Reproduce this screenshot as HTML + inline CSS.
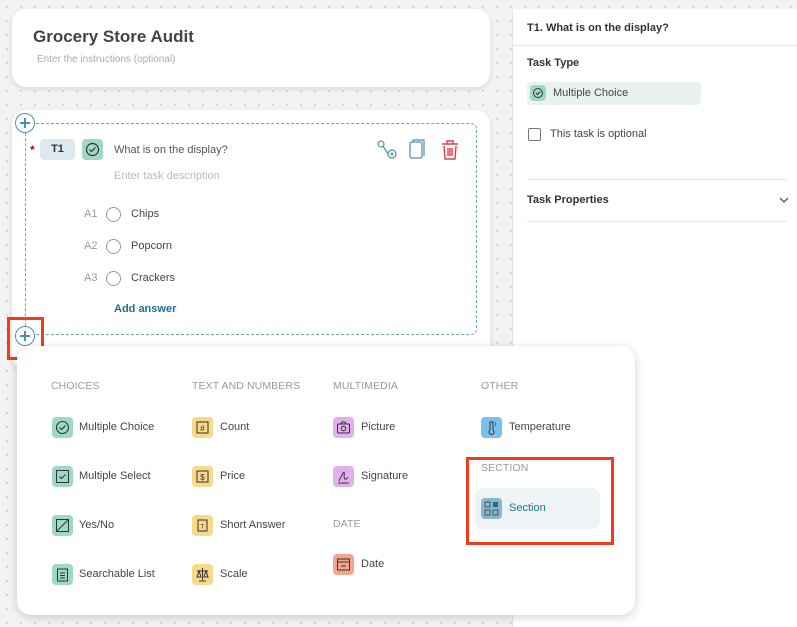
<!DOCTYPE html>
<html><head><style>
*{box-sizing:border-box;margin:0;padding:0}
body{width:797px;height:627px;overflow:hidden;background:#f3f3f3;background-image:radial-gradient(#d4d4d4 1px,transparent 1.2px);background-size:14px 14px;font-family:"Liberation Sans",sans-serif;position:relative;color:#444}
.abs{position:absolute}
.card{position:absolute;background:#fff;border-radius:14px;box-shadow:0 2px 6px rgba(0,0,0,.12)}
.ic{position:absolute;width:21px;height:21px;border-radius:4px}
.lbl{position:absolute;font-size:11px;color:#444}
.hd{position:absolute;font-size:10.5px;color:#999;letter-spacing:.1px}
.g{background:#9ed8c8}.y{background:#f8d98a}.p{background:#e2b0ef}.b{background:#7cc1ec}.o{background:#f4a48f}
.circ{position:absolute;width:20px;height:20px;border:1.2px solid #4d8fb0;border-radius:50%;background:#fff}
.circ:before{content:"";position:absolute;left:4px;top:8.4px;width:10px;height:1.2px;background:#4d8fb0}
.circ:after{content:"";position:absolute;left:8.4px;top:4px;width:1.2px;height:10px;background:#4d8fb0}
.radio{position:absolute;width:15px;height:15px;border:1.3px solid #999;border-radius:50%}
</style></head><body>

<div class="card" style="left:12px;top:9px;width:478px;height:78px">
 <div class="abs" style="left:21px;top:18px;font-size:17px;font-weight:bold;color:#444">Grocery Store Audit</div>
 <div class="abs" style="left:25px;top:45px;font-size:10px;color:#aaa">Enter the instructions (optional)</div>
</div>

<div class="card" style="left:12px;top:110px;width:478px;height:260px"></div>
<div class="abs" style="left:25px;top:123px;width:452px;height:212px;border:1px dashed #6ea3bf;border-radius:6px"></div>
<div class="circ" style="left:15px;top:113px"></div>
<div class="abs" style="left:30px;top:143px;color:#c00;font-size:12px;font-weight:bold">*</div>
<div class="abs" style="left:40px;top:139px;width:35px;height:21px;background:#dde9ef;border-radius:4px;font-size:11px;font-weight:bold;text-align:center;line-height:21px;color:#333">T1</div>
<div class="ic g" style="left:82px;top:139px"><svg width="21" height="21"><circle cx="10.5" cy="10.5" r="6" fill="none" stroke="#333" stroke-width="1.2"/><path d="M7.5 10.5l2 2 4-4" fill="none" stroke="#333" stroke-width="1.2"/></svg></div>
<div class="lbl" style="left:114px;top:144px;color:#555">What is on the display?</div>
<div class="lbl" style="left:114px;top:170px;color:#bbb">Enter task description</div>
<svg class="abs" style="left:376px;top:139px" width="90" height="22"><circle cx="5" cy="5" r="3" fill="none" stroke="#4d8fb0" stroke-width="1.2"/><path d="M7 7l5 8" stroke="#4d8fb0" stroke-width="1.2"/><circle cx="16" cy="15" r="4" fill="none" stroke="#4d8fb0" stroke-width="1.2"/><path d="M14 15h4M16 13v4" stroke="#4d8fb0"/><rect x="34" y="3" width="12" height="16" rx="1.5" fill="none" stroke="#4d8fb0" stroke-width="1.2"/><path d="M37 3V1h11v16" fill="none" stroke="#4d8fb0" stroke-width="1.2"/><path d="M66 5h16M71 5V2h6v3M68 7l1 13h10l1-13M72 9v8M74 9v8M76 9v8" fill="none" stroke="#e8394a" stroke-width="1.4"/></svg>
<div class="lbl" style="left:84px;top:208px;color:#999">A1</div><div class="radio" style="left:106px;top:207px"></div><div class="lbl" style="left:131px;top:208px">Chips</div>
<div class="lbl" style="left:84px;top:240px;color:#999">A2</div><div class="radio" style="left:106px;top:239px"></div><div class="lbl" style="left:131px;top:240px">Popcorn</div>
<div class="lbl" style="left:84px;top:272px;color:#999">A3</div><div class="radio" style="left:106px;top:271px"></div><div class="lbl" style="left:131px;top:272px">Crackers</div>
<div class="lbl" style="left:114px;top:303px;color:#1f6e94;font-weight:bold">Add answer</div>
<div class="circ" style="left:15px;top:326px"></div>
<div class="abs" style="left:7px;top:317px;width:37px;height:43px;border:3px solid #f23a1f"></div>

<div class="abs" style="left:512px;top:9px;width:285px;height:618px;background:#fff;border-left:1px solid #e3e3e3">
 <div class="abs" style="left:14px;top:13px;font-size:11px;font-weight:bold;color:#333">T1. What is on the display?</div>
 <div class="abs" style="left:0;top:36px;width:285px;border-top:1px solid #e5e5e5"></div>
 <div class="abs" style="left:14px;top:48px;font-size:11px;font-weight:bold;color:#333">Task Type</div>
 <div class="abs" style="left:14px;top:73px;width:174px;height:23px;background:#eaf2ef;border-radius:3px"></div>
 <div class="ic g" style="left:17px;top:76px;width:16px;height:16px"><svg width="16" height="16"><circle cx="8" cy="8" r="4.5" fill="none" stroke="#333"/><path d="M6 8l1.5 1.5 3-3" fill="none" stroke="#333"/></svg></div>
 <div class="abs" style="left:40px;top:78px;font-size:11px">Multiple Choice</div>
 <div class="abs" style="left:15px;top:119px;width:13px;height:13px;border:1.3px solid #777;border-radius:2px"></div>
 <div class="abs" style="left:37px;top:119px;font-size:11px">This task is optional</div>
 <div class="abs" style="left:14px;top:170px;width:260px;border-top:1px solid #e5e5e5"></div>
 <div class="abs" style="left:14px;top:185px;font-size:11px;font-weight:bold;color:#333">Task Properties</div>
 <svg class="abs" style="left:266px;top:187px" width="10" height="8"><path d="M1 2l4 4 4-4" fill="none" stroke="#555" stroke-width="1.3"/></svg>
 <div class="abs" style="left:14px;top:212px;width:260px;border-top:1px solid #e5e5e5"></div>
</div>

<div class="card" style="left:17px;top:346px;width:618px;height:269px;box-shadow:0 2px 10px rgba(0,0,0,.18)"></div>
<div class="hd" style="left:51px;top:380px">CHOICES</div>
<div class="hd" style="left:192px;top:380px">TEXT AND NUMBERS</div>
<div class="hd" style="left:333px;top:380px">MULTIMEDIA</div>
<div class="hd" style="left:481px;top:380px">OTHER</div>

<div class="ic g" style="left:52px;top:417px"><svg width="21" height="21"><circle cx="10.5" cy="10.5" r="6" fill="none" stroke="#333" stroke-width="1.1"/><path d="M7.5 10.5l2 2 4-4" fill="none" stroke="#333" stroke-width="1.1"/></svg></div><div class="lbl" style="left:79px;top:421px">Multiple Choice</div>
<div class="ic g" style="left:52px;top:466px"><svg width="21" height="21"><rect x="4.5" y="4.5" width="12" height="12" fill="none" stroke="#333"/><path d="M7.5 10.5l2 2 4-4" fill="none" stroke="#333"/></svg></div><div class="lbl" style="left:79px;top:470px">Multiple Select</div>
<div class="ic g" style="left:52px;top:515px"><svg width="21" height="21"><rect x="4.5" y="4.5" width="12" height="12" fill="none" stroke="#333"/><path d="M4.5 16.5l12-12" stroke="#333"/></svg></div><div class="lbl" style="left:79px;top:519px">Yes/No</div>
<div class="ic g" style="left:52px;top:564px"><svg width="21" height="21"><rect x="5.5" y="5" width="10" height="12" fill="none" stroke="#333"/><path d="M8 9h5M8 11.5h5M8 14h5" stroke="#333"/></svg></div><div class="lbl" style="left:79px;top:568px">Searchable List</div>

<div class="ic y" style="left:192px;top:417px"><svg width="21" height="21"><rect x="5" y="5" width="11" height="11" fill="none" stroke="#333"/><text x="10.5" y="14" font-size="8" text-anchor="middle" fill="#333">#</text></svg></div><div class="lbl" style="left:220px;top:421px">Count</div>
<div class="ic y" style="left:192px;top:466px"><svg width="21" height="21"><rect x="5" y="5" width="11" height="11" fill="none" stroke="#333"/><text x="10.5" y="14" font-size="8" text-anchor="middle" fill="#333">$</text></svg></div><div class="lbl" style="left:220px;top:470px">Price</div>
<div class="ic y" style="left:192px;top:515px"><svg width="21" height="21"><rect x="6" y="5" width="9" height="11" fill="none" stroke="#333"/><text x="10.5" y="13.5" font-size="6" text-anchor="middle" fill="#333">T</text></svg></div><div class="lbl" style="left:220px;top:519px">Short Answer</div>
<div class="ic y" style="left:192px;top:564px"><svg width="21" height="21"><path d="M10.5 4v12M5 7h11M7 7l-2 6h4zM14 7l-2 6h4zM7 17h7" fill="none" stroke="#333"/></svg></div><div class="lbl" style="left:220px;top:568px">Scale</div>

<div class="ic p" style="left:333px;top:417px"><svg width="21" height="21"><rect x="4.5" y="7" width="12" height="9" rx="1" fill="none" stroke="#333"/><circle cx="10.5" cy="11.5" r="2.3" fill="none" stroke="#333"/><path d="M8 7l1-2h3l1 2" fill="none" stroke="#333"/></svg></div><div class="lbl" style="left:361px;top:421px">Picture</div>
<div class="ic p" style="left:333px;top:466px"><svg width="21" height="21"><path d="M6 15c2-4 4-9 5-9s-1 6 1 7 2-2 3-1M5 17h11" fill="none" stroke="#333"/></svg></div><div class="lbl" style="left:361px;top:470px">Signature</div>
<div class="hd" style="left:333px;top:518px">DATE</div>
<div class="ic o" style="left:333px;top:554px"><svg width="21" height="21"><rect x="4.5" y="5" width="12" height="11" fill="none" stroke="#333"/><path d="M4.5 8h12M8 12h5" stroke="#333"/></svg></div><div class="lbl" style="left:361px;top:558px">Date</div>

<div class="ic b" style="left:481px;top:417px"><svg width="21" height="21"><path d="M9 5v8a2.5 2.5 0 1 0 3 0V5z" fill="none" stroke="#333"/><path d="M14 6h1M14 8h1" stroke="#333"/></svg></div><div class="lbl" style="left:509px;top:421px">Temperature</div>
<div class="abs" style="left:466px;top:457px;width:148px;height:88px;border:3px solid #f23a1f"></div>
<div class="hd" style="left:481px;top:462px">SECTION</div>
<div class="abs" style="left:475px;top:488px;width:125px;height:41px;background:#eef4f6;border-radius:8px"></div>
<div class="ic" style="left:481px;top:498px;background:#8fb6c6"><svg width="21" height="21"><rect x="4" y="4" width="5" height="5" fill="none" stroke="#2d5f78"/><rect x="12" y="4" width="5" height="5" fill="#1f6e94"/><rect x="4" y="12" width="5" height="5" fill="none" stroke="#2d5f78"/><rect x="12" y="12" width="5" height="5" fill="none" stroke="#2d5f78"/></svg></div>
<div class="lbl" style="left:509px;top:502px;color:#1f6e94">Section</div>
</body></html>
